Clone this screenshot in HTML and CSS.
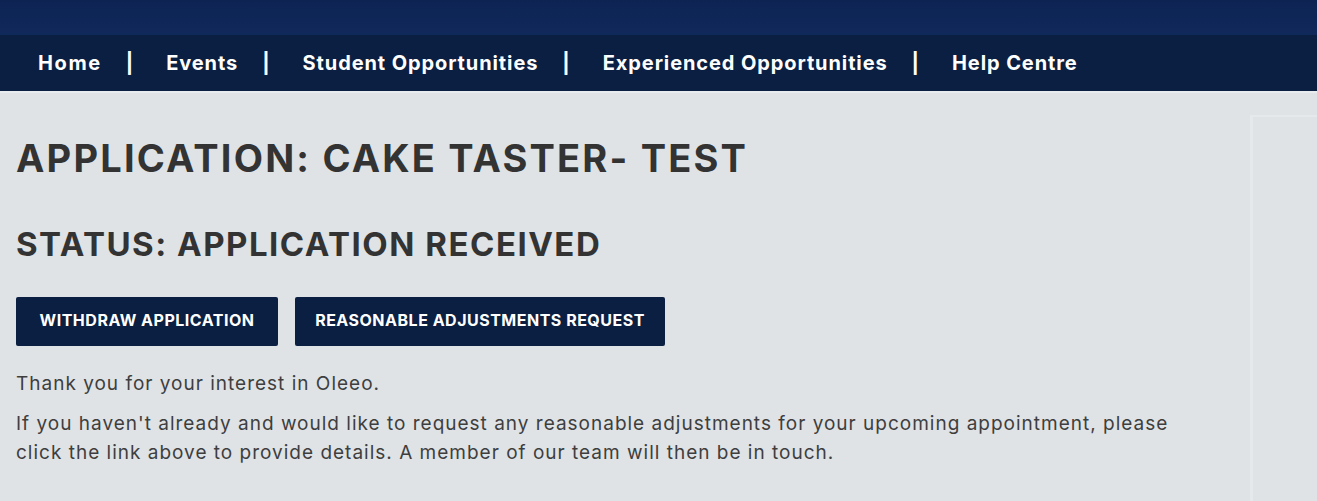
FILE: index.html
```html
<!DOCTYPE html>
<html lang="en">
<head>
<meta charset="utf-8">
<title>Application: Cake Taster- Test</title>
<link rel="stylesheet" href="styles.css">
</head>
<body>
<header class="topbar"></header>
<nav class="mainnav">
  <ul class="navlist">
    <li class="navitem"><a href="#">Home</a></li>
    <li class="sep">|</li>
    <li class="navitem"><a href="#">Events</a></li>
    <li class="sep">|</li>
    <li class="navitem"><a href="#">Student Opportunities</a></li>
    <li class="sep">|</li>
    <li class="navitem"><a href="#">Experienced Opportunities</a></li>
    <li class="sep">|</li>
    <li class="navitem"><a href="#">Help Centre</a></li>
  </ul>
</nav>
<div class="page">
  <main class="content">
    <h1 class="title">APPLICATION: CAKE TASTER- TEST</h1>
    <h2 class="status">STATUS: APPLICATION RECEIVED</h2>
    <div class="actions">
      <a class="btn btn-withdraw" href="#">WITHDRAW APPLICATION</a>
      <a class="btn btn-adjust" href="#">REASONABLE ADJUSTMENTS REQUEST</a>
    </div>
    <p class="msg">Thank you for your interest in Oleeo.</p>
    <p class="msg">If you haven't already and would like to request any reasonable adjustments for your upcoming appointment, please click the link above to provide details. A member of our team will then be in touch.</p>
  </main>
  <aside class="sidepanel"></aside>
</div>
</body>
</html>
```
FILE: styles.css
```css
html, body {
  margin: 0;
  padding: 0;
}
body {
  background: #dfe3e6;
  font-family: Inter, "Noto Sans", "DejaVu Sans", sans-serif;
  color: #333333;
  height: 501px;
  overflow: hidden;
}
.topbar {
  height: 35px;
  background: linear-gradient(#0d2453, #10295b);
}
.mainnav {
  height: 56px;
  background: #0b1f42;
  border-bottom: 2px solid #e8ecef;
}
.navlist {
  list-style: none;
  margin: 0;
  padding: 0 0 0 38px;
  display: flex;
  align-items: center;
  height: 56px;
}
.navitem a {
  color: #ffffff;
  text-decoration: none;
  font-weight: 700;
  font-size: 20px;
  letter-spacing: 0.9px;
}
.navitem:first-child a {
  letter-spacing: 1.6px;
}
.sep {
  color: #ffffff;
  font-weight: 700;
  font-size: 20px;
  margin: 0 33px 0 24px;
}
.page {
  display: flex;
}
.content {
  flex: 1;
  padding: 0 16px;
}
.sidepanel {
  width: 64px;
  margin-top: 22px;
  height: 400px;
  border-top: 2px solid #e6e9eb;
  border-left: 3px solid #e6e9eb;
}
.title {
  margin: 42px 0 0;
  font-size: 38px;
  line-height: 46px;
  font-weight: 700;
  letter-spacing: 2.2px;
}
.status {
  margin: 42px 0 0;
  font-size: 33px;
  line-height: 42px;
  font-weight: 700;
  letter-spacing: 1.5px;
}
.actions {
  display: flex;
  gap: 17px;
  margin-top: 32px;
}
.btn {
  display: flex;
  align-items: center;
  justify-content: center;
  box-sizing: border-box;
  height: 49px;
  padding-bottom: 3px;
  background: #0b1f42;
  color: #ffffff;
  text-decoration: none;
  font-weight: 700;
  font-size: 16px;
  letter-spacing: 0.5px;
  border-radius: 2px;
}
.btn-withdraw { width: 262px; }
.btn-adjust { width: 370px; }
.msg {
  margin: 23px 0 0;
  font-size: 19px;
  line-height: 29px;
  font-weight: 400;
  color: #3e3e3e;
  letter-spacing: 1px;
  max-width: 1180px;
}
.msg + .msg {
  margin-top: 11px;
}
```
